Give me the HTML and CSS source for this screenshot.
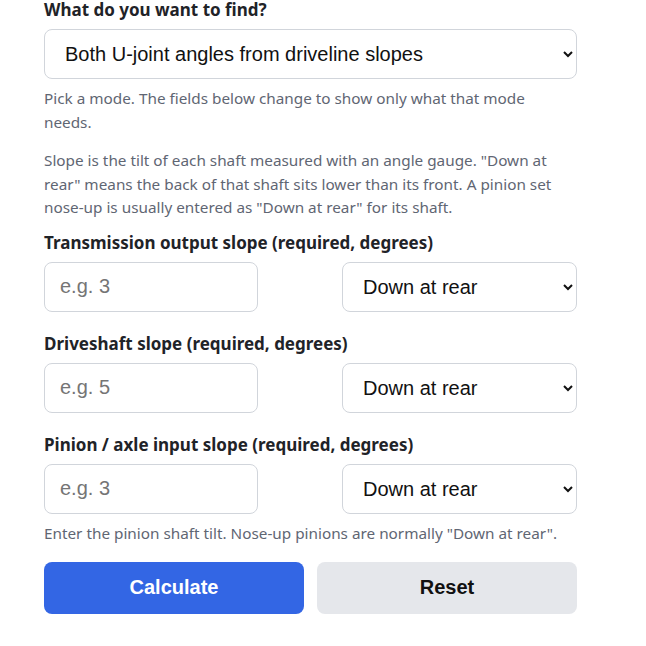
FILE: index.html
```html
<!DOCTYPE html>
<html lang="en">
<head>
    <meta charset="UTF-8">
    <meta name="viewport" content="width=device-width, initial-scale=1.0">
    <title>U-joint angle calculator</title>
    <link rel="stylesheet" href="styles.css">
</head>
<body>
    <form class="calc">
        <label class="label first" for="mode">What do you want to find?</label>
        <select id="mode" class="field wide">
            <option>Both U-joint angles from driveline slopes</option>
        </select>
        <p class="hint">Pick a mode. The fields below change to show only what that mode needs.</p>
        <p class="hint note">Slope is the tilt of each shaft measured with an angle gauge. "Down at rear" means the back of that shaft sits lower than its front. A pinion set nose-up is usually entered as "Down at rear" for its shaft.</p>

        <label class="label after-note" for="trans">Transmission output slope (required, degrees)</label>
        <div class="row">
            <input id="trans" class="field" type="text" placeholder="e.g. 3">
            <select class="field">
                <option>Down at rear</option>
                <option>Up at rear</option>
            </select>
        </div>

        <label class="label" for="drive">Driveshaft slope (required, degrees)</label>
        <div class="row">
            <input id="drive" class="field" type="text" placeholder="e.g. 5">
            <select class="field">
                <option>Down at rear</option>
                <option>Up at rear</option>
            </select>
        </div>

        <label class="label" for="pinion">Pinion / axle input slope (required, degrees)</label>
        <div class="row">
            <input id="pinion" class="field" type="text" placeholder="e.g. 3">
            <select class="field">
                <option>Down at rear</option>
                <option>Up at rear</option>
            </select>
        </div>
        <p class="hint">Enter the pinion shaft tilt. Nose-up pinions are normally "Down at rear".</p>

        <div class="buttons">
            <button type="button" class="btn primary">Calculate</button>
            <button type="reset" class="btn secondary">Reset</button>
        </div>
    </form>
</body>
</html>
```

FILE: styles.css
```css
*{
    box-sizing: border-box;
}
body{
    margin: 0;
    background: #fff;
    font-family: "Noto Sans", "Open Sans", sans-serif;
}
.calc{
    width: 533px;
    margin: 0 0 0 44px;
    display: flex;
    flex-direction: column;
}
.label{
    display: block;
    margin-top: 20px;
    font-size: 17px;
    line-height: 24px;
    font-weight: 700;
    color: #1f2328;
}
.label.first{
    margin-top: 0;
    line-height: 20px;
}
.label.first + .field{
    margin-top: 9px;
}
.label.after-note{
    margin-top: 11px;
}
.field{
    height: 50px;
    margin-top: 7px;
    padding: 0 12px 0 15px;
    border: 1px solid #d1d5db;
    border-radius: 8px;
    background: #fff;
    font-family: "Liberation Sans", Arial, sans-serif;
    font-size: 20px;
    color: #111;
}
input.field::placeholder{
    color: #757575;
}
.wide{
    width: 100%;
    padding-left: 16px;
}
.hint{
    max-width: 520px;
    margin: 7px 0 0;
    font-size: 15.3px;
    line-height: 24px;
    color: #5f6673;
}
.hint.note{
    margin-top: 15px;
    line-height: 23.5px;
}
.row{
    display: grid;
    grid-template-columns: 214px 235px;
    justify-content: space-between;
}
.row select.field{
    padding-left: 16px;
}
.buttons{
    display: grid;
    grid-template-columns: 1fr 1fr;
    gap: 13px;
    margin-top: 17px;
}
.btn{
    height: 52px;
    border: 0;
    border-radius: 8px;
    font-family: "Liberation Sans", Arial, sans-serif;
    font-size: 20px;
    font-weight: 700;
    cursor: pointer;
}
.btn.primary{
    background: #3366e4;
    color: #fff;
}
.btn.secondary{
    background: #e5e7eb;
    color: #111;
}
```
